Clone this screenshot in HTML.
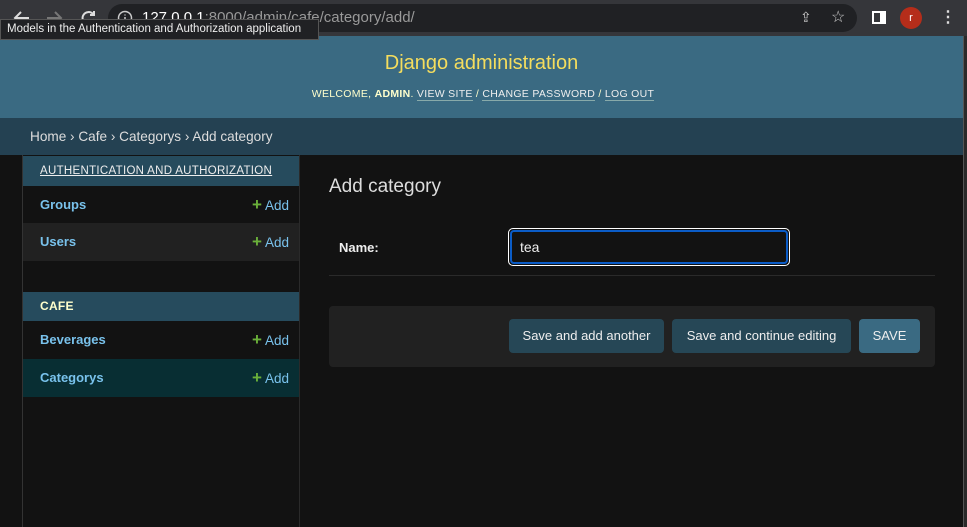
<!DOCTYPE html>
<html><head><meta charset="utf-8"><style>
*{margin:0;padding:0;box-sizing:border-box}
body{width:967px;height:527px;overflow:hidden;background:#121212;font-family:"Liberation Sans",sans-serif;position:relative;color:#eee}
.abs{position:absolute}
#tb{left:0;top:0;width:967px;height:36px;background:#35363a}
#url{left:108px;top:4px;width:749px;height:28px;border-radius:14px;background:#202124}
#hdr{left:0;top:36px;width:963px;height:82px;background:#3a6a82}
#bc{left:0;top:118px;width:963px;height:37px;background:#244152;font-size:13.6px;color:#ddd;padding:11px 0 0 30px}
#sb{left:963px;top:36px;width:4px;height:491px;background:#2a2a2a;border-left:1px solid #555}
.nav{left:23px;width:276px;font-size:13px}
.cap{background:#264b5d;font-size:11.5px;padding-left:17px;letter-spacing:.3px}
.row{padding-left:17px;font-weight:bold;color:#79c2ec;font-size:13px}
.add{position:absolute;right:10px;font-weight:normal;color:#79c2ec;font-size:13.5px}
.add b{color:#6ab03a;font-size:17px;margin-right:3px}
.btn{position:absolute;top:319px;height:34px;border-radius:4px;background:#264756;color:#eee;font-size:13px;text-align:center;line-height:34px}
</style></head><body>
<div id="tb" class="abs"></div>
<div id="url" class="abs"></div>
<svg class="abs" style="left:10px;top:8px" width="90" height="20" viewBox="0 0 90 20" fill="none" stroke-width="2">
<path d="M19 10H5M11 4L5 10l6 6" stroke="#ddd"/>
<path d="M37 10h14M45 4l6 6-6 6" stroke="#777"/>
<path d="M83 6a6 6 0 1 0 1.5 5" stroke="#ddd"/><path d="M84 3v4h-4" stroke="#ddd"/>
</svg>
<svg class="abs" style="left:117px;top:10px" width="16" height="16"><circle cx="8" cy="8" r="6.5" stroke="#ccc" stroke-width="1.5" fill="none"/><path d="M8 7v5M8 4.5v1" stroke="#ccc" stroke-width="1.5"/></svg>
<div class="abs" style="left:142px;top:9px;font-size:15px;color:#fff">127.0.0.1<span style="color:#999">:8000/admin/cafe/category/add/</span></div>
<div class="abs" style="left:800px;top:9px;color:#ccc;font-size:14px">⇪</div>
<div class="abs" style="left:831px;top:7px;color:#ccc;font-size:16px">☆</div>
<div class="abs" style="left:872px;top:11px;width:14px;height:13px;border:2px solid #fff;border-right-width:6px"></div>
<div class="abs" style="left:900px;top:7px;width:22px;height:22px;border-radius:50%;background:#b52d1a;color:#fff;font-size:11px;text-align:center;line-height:22px">r</div>
<div class="abs" style="left:940px;top:7px;color:#ddd;font-size:16px;font-weight:bold">⋮</div>
<div id="hdr" class="abs"></div>
<div class="abs" style="left:0;top:19px;width:319px;height:21px;background:#202124;border:1px solid #555;font-size:11.5px;color:#eee;padding:3px 0 0 6px">Models in the Authentication and Authorization application</div>
<div class="abs" style="left:0;top:52px;width:963px;text-align:center;color:#f5dd5d;font-size:20px">Django administration</div>
<div class="abs" style="left:0;top:88px;width:963px;text-align:center;color:#ffc;font-size:10.5px;letter-spacing:.3px;padding-left:3px">WELCOME, <b>ADMIN</b>. <span style="color:#eee;border-bottom:1px solid #8aa">VIEW SITE</span> / <span style="color:#eee;border-bottom:1px solid #8aa">CHANGE PASSWORD</span> / <span style="color:#eee;border-bottom:1px solid #8aa">LOG OUT</span></div>
<div id="bc" class="abs">Home › Cafe › Categorys › Add category</div>
<div id="sb" class="abs"></div>
<div class="abs" style="left:22px;top:155px;width:1px;height:372px;background:#333"></div>
<div class="abs" style="left:299px;top:155px;width:1px;height:372px;background:#2a2a2a"></div>
<div class="abs nav cap" style="top:156px;height:30px;line-height:30px;color:#eee"><span style="text-decoration:underline">AUTHENTICATION AND AUTHORIZATION</span></div>
<div class="abs nav row" style="top:186px;height:37px;line-height:37px">Groups<span class="add"><b>+</b>Add</span></div>
<div class="abs nav row" style="top:223px;height:38px;line-height:38px;background:#212121">Users<span class="add"><b>+</b>Add</span></div>
<div class="abs nav cap" style="top:292px;height:29px;line-height:29px;color:#ffc;font-weight:bold;font-size:12px">CAFE</div>
<div class="abs nav row" style="top:321px;height:38px;line-height:38px">Beverages<span class="add"><b>+</b>Add</span></div>
<div class="abs nav row" style="top:359px;height:38px;line-height:38px;background:#082e33">Categorys<span class="add"><b>+</b>Add</span></div>
<div class="abs" style="left:329px;top:176px;font-size:19px;color:#ddd">Add category</div>
<div class="abs" style="left:339px;top:240px;font-size:13px;font-weight:bold;color:#eee">Name:</div>
<div class="abs" style="left:508px;top:228px;width:282px;height:38px;border:1px solid #fff;border-radius:5px;padding:1px"><div style="width:100%;height:100%;border:2px solid #0b5cc7;border-radius:4px;background:#121212;font-size:14px;color:#eee;padding:7px 0 0 8px">tea</div></div>
<div class="abs" style="left:329px;top:275px;width:606px;height:1px;background:#2a2a2a"></div>
<div class="abs" style="left:329px;top:306px;width:606px;height:61px;background:#212121;border-radius:4px"></div>
<div class="btn" style="left:509px;width:155px">Save and add another</div>
<div class="btn" style="left:672px;width:179px">Save and continue editing</div>
<div class="btn" style="left:859px;width:61px;background:#3a6a82">SAVE</div>
</body></html>
